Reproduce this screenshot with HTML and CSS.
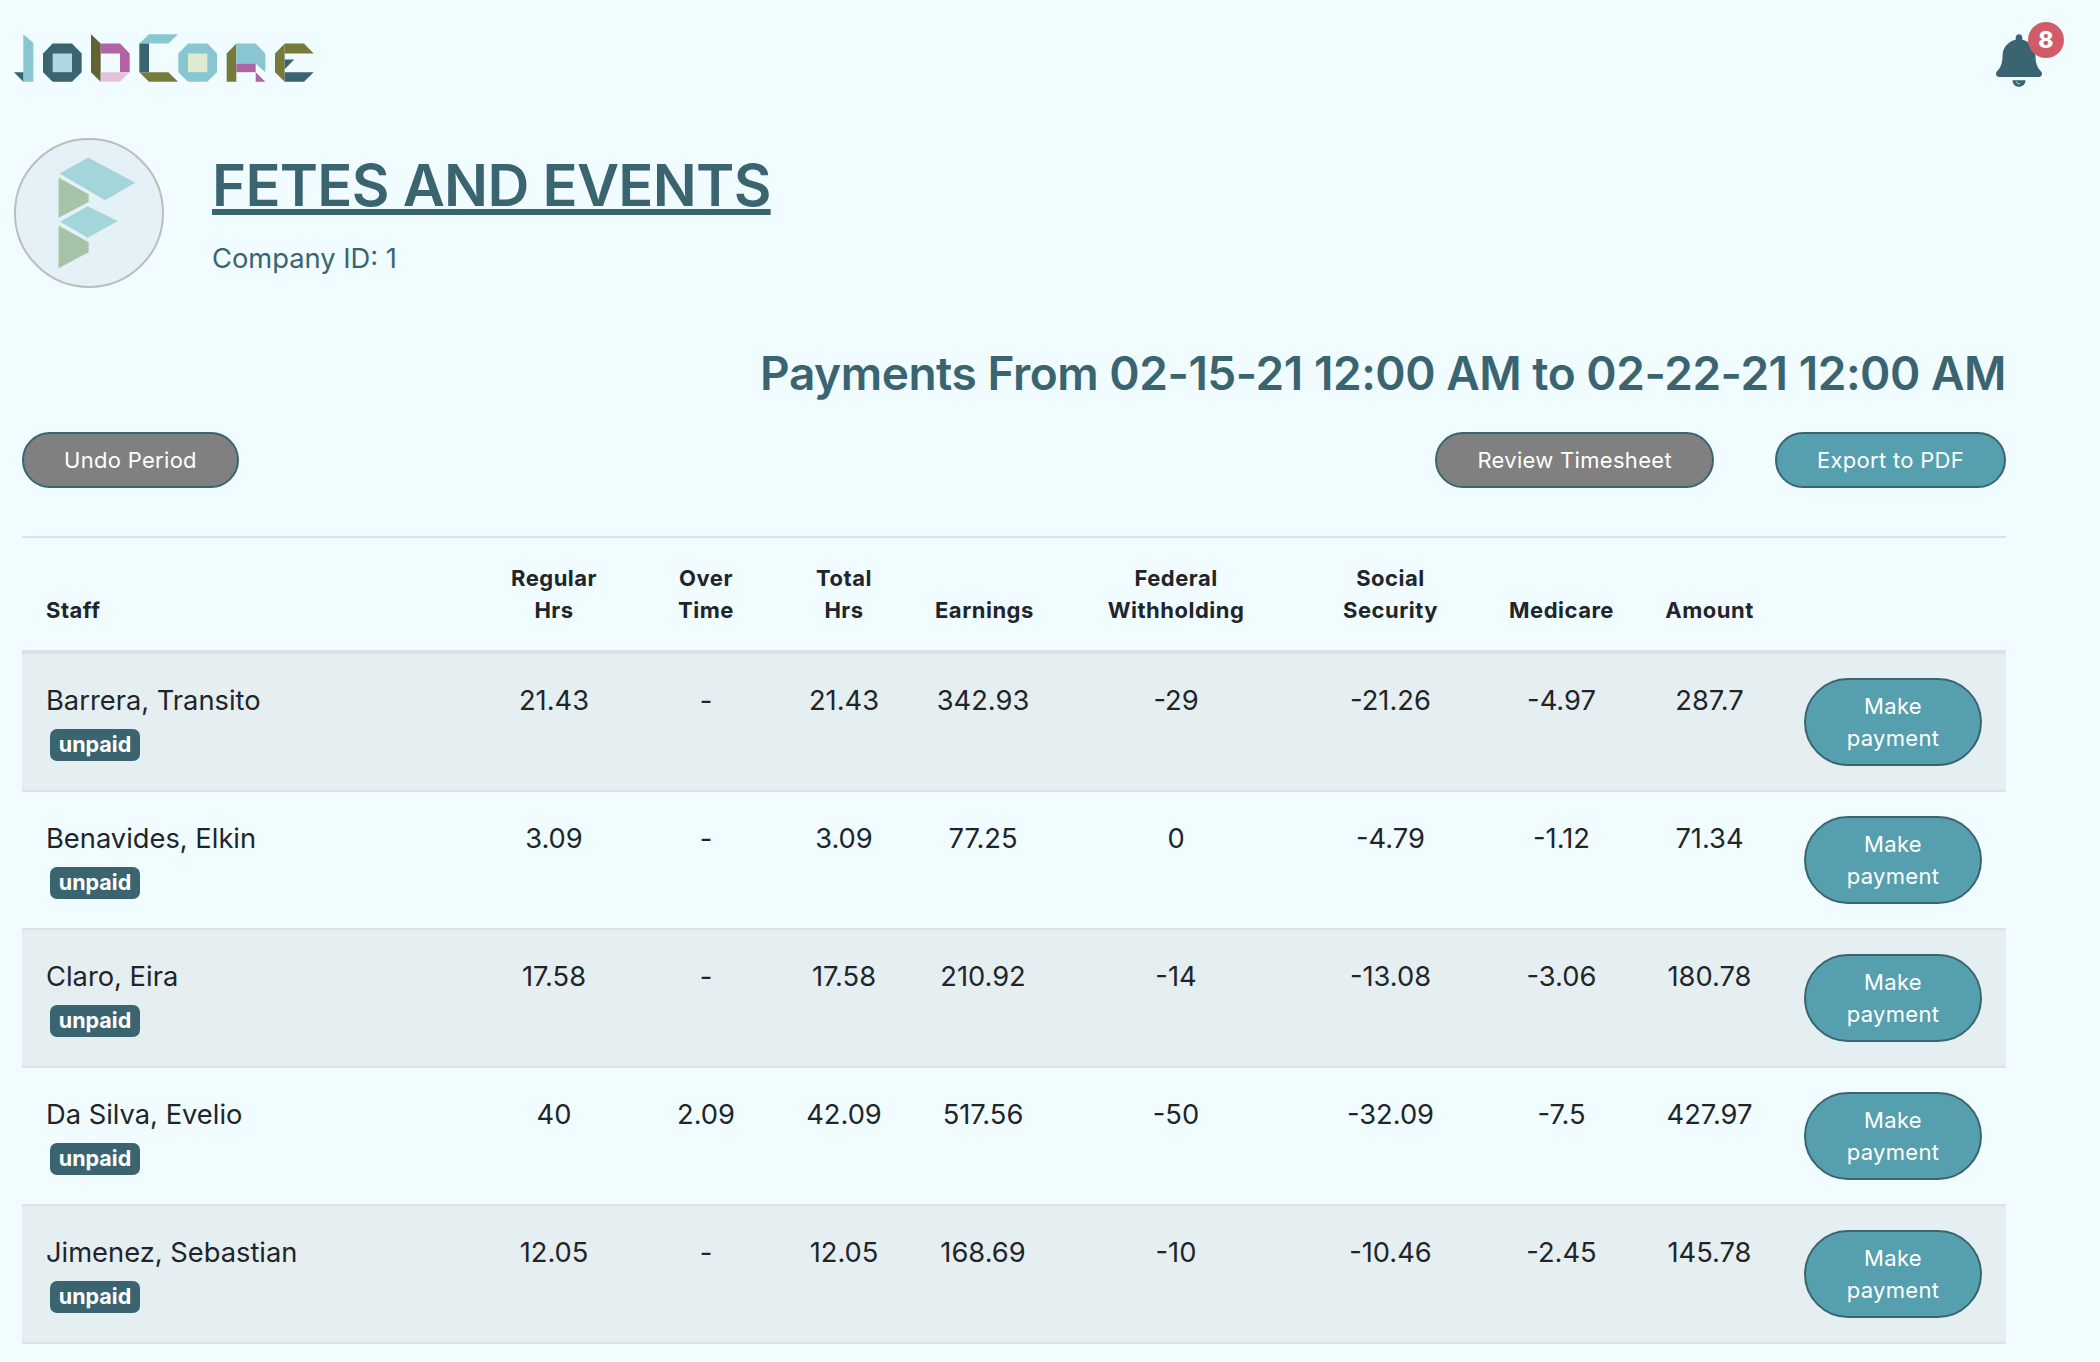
FILE: index.html
```html
<!DOCTYPE html>
<html>
<head>
	<title>JobCore - Payments</title>
	<link rel="stylesheet" href="styles.css">
</head>
<body>
	<header class="topbar">
		<svg class="logo" viewBox="42 102 900 143" role="img" aria-label="JobCore">
			<polygon fill="#88c7d2" points="70,102 100,128 100,245 70,245"/>
			<polygon fill="#3a6570" points="42,216 70,216 70,245"/>
			<polygon fill="#3a6570" points="158,130 216,130 245,160 245,216 216,245 158,245 129,216 129,160"/>
			<rect fill="#aed8e0" x="158" y="160" width="58" height="56"/>
			<polygon fill="#5f6332" points="273,102 302,130 302,245 273,216"/>
			<polygon fill="#b064a3" points="302,130 360,130 389,160 389,216 360,216 360,160 302,160"/>
			<polygon fill="#e4c0dc" points="302,216 389,216 360,245 302,245"/>
			<polygon fill="#88c7d2" points="418,130 447,102 534,102 505,130"/>
			<rect fill="#3a6570" x="418" y="130" width="29" height="86"/>
			<polygon fill="#767b3c" points="418,216 505,216 534,245 447,245"/>
			<polygon fill="#88c7d2" points="564,130 622,130 651,160 651,216 622,245 564,245 535,216 535,160"/>
			<rect fill="#e0ead0" x="564" y="160" width="58" height="56"/>
			<polygon fill="#767b3c" points="680,160 709,130 709,245 680,245"/>
			<polygon fill="#88c7d2" points="709,130 767,130 796,160 796,216 767,190 709,190"/>
			<rect fill="#b064a3" x="709" y="190" width="58" height="26"/>
			<polygon fill="#b064a3" points="767,216 796,245 767,245"/>
			<polygon fill="#767b3c" points="825,160 854,130 854,245 825,216"/>
			<polygon fill="#767b3c" points="854,130 912,130 941,160 854,160"/>
			<polygon fill="#3a6570" points="854,178 883,178 854,207"/>
			<polygon fill="#3a6570" points="854,216 941,216 912,245 854,245"/>
		</svg>
		<div class="bell">
			<svg class="bell-icon" viewBox="0 0 448 512">
				<path fill="#3a6570" d="M224 512c35.32 0 63.97-28.65 63.97-64H160.03c0 35.35 28.65 64 63.97 64zm215.39-149.71c-19.32-20.76-55.47-51.99-55.47-154.29 0-77.7-54.48-139.9-127.94-155.16V32c0-17.67-14.32-32-31.98-32s-31.98 14.33-31.98 32v20.84C118.56 68.1 64.08 130.3 64.08 208c0 102.3-36.15 133.53-55.47 154.29-6 6.45-8.66 14.16-8.61 21.71.11 16.4 12.98 32 32.1 32h383.8c19.12 0 32-15.6 32.1-32 .05-7.55-2.61-15.27-8.61-21.71z"/>
				<path fill="none" stroke="#f0fcff" stroke-width="9" d="M200 462c4 14 16 22 30 22"/>
			</svg>
			<span class="bell-count">8</span>
		</div>
	</header>

	<section class="company">
		<svg class="company-logo" viewBox="42 54 448 448">
			<circle cx="266" cy="278" r="221" fill="#e4f1f7" stroke="#bdbdbd" stroke-width="6"/>
			<polygon fill="#a3d5db" points="178,160 264,112 404,188 314,240"/>
			<polygon fill="#a6c3a8" points="175,172 265,222 265,245 175,292"/>
			<polygon fill="#a3d5db" points="180,304 262,258 352,302 262,352"/>
			<polygon fill="#a6c3a8" points="175,315 265,365 265,395 175,443"/>
		</svg>
		<div class="company-info">
			<h1 class="company-name"><a href="#">FETES AND EVENTS</a></h1>
			<div class="company-id">Company ID: 1</div>
		</div>
	</section>

	<main class="content">
		<h2 class="period">Payments From 02-15-21 12:00 AM to 02-22-21 12:00 AM</h2>

		<div class="actions">
			<button class="btn btn-gray">Undo Period</button>
			<div class="actions-right">
				<button class="btn btn-gray">Review Timesheet</button>
				<button class="btn btn-teal">Export to PDF</button>
			</div>
		</div>

		<table class="payments">
			<colgroup>
				<col class="col-staff">
				<col class="col-regular">
				<col class="col-over">
				<col class="col-total">
				<col class="col-earnings">
				<col class="col-federal">
				<col class="col-social">
				<col class="col-medicare">
				<col class="col-amount">
				<col class="col-pay">
			</colgroup>
			<thead>
				<tr>
					<th class="staff">Staff</th>
					<th>Regular<br>Hrs</th>
					<th>Over<br>Time</th>
					<th>Total<br>Hrs</th>
					<th>Earnings</th>
					<th>Federal<br>Withholding</th>
					<th>Social<br>Security</th>
					<th>Medicare</th>
					<th>Amount</th>
					<th></th>
				</tr>
			</thead>
			<tbody>
				<tr>
					<td class="staff">Barrera, Transito<span class="badge">unpaid</span></td>
					<td>21.43</td><td>-</td><td>21.43</td><td>342.93</td><td>-29</td><td>-21.26</td><td>-4.97</td><td>287.7</td>
					<td><button class="btn btn-teal btn-pay">Make payment</button></td>
				</tr>
				<tr>
					<td class="staff">Benavides, Elkin<span class="badge">unpaid</span></td>
					<td>3.09</td><td>-</td><td>3.09</td><td>77.25</td><td>0</td><td>-4.79</td><td>-1.12</td><td>71.34</td>
					<td><button class="btn btn-teal btn-pay">Make payment</button></td>
				</tr>
				<tr>
					<td class="staff">Claro, Eira<span class="badge">unpaid</span></td>
					<td>17.58</td><td>-</td><td>17.58</td><td>210.92</td><td>-14</td><td>-13.08</td><td>-3.06</td><td>180.78</td>
					<td><button class="btn btn-teal btn-pay">Make payment</button></td>
				</tr>
				<tr>
					<td class="staff">Da Silva, Evelio<span class="badge">unpaid</span></td>
					<td>40</td><td>2.09</td><td>42.09</td><td>517.56</td><td>-50</td><td>-32.09</td><td>-7.5</td><td>427.97</td>
					<td><button class="btn btn-teal btn-pay">Make payment</button></td>
				</tr>
				<tr>
					<td class="staff">Jimenez, Sebastian<span class="badge">unpaid</span></td>
					<td>12.05</td><td>-</td><td>12.05</td><td>168.69</td><td>-10</td><td>-10.46</td><td>-2.45</td><td>145.78</td>
					<td><button class="btn btn-teal btn-pay">Make payment</button></td>
				</tr>
			</tbody>
		</table>
	</main>
</body>
</html>
```

FILE: styles.css
```css
body {
	margin: 0;
	background-color: #f0fcff;
	color: #212529;
	font-family: Inter, "Liberation Sans", sans-serif;
	font-size: 27.3px;
	line-height: 41px;
}
.topbar {
	display: flex;
	justify-content: space-between;
	padding: 34px 59px 0 14px;
}
.logo {
	width: 300px;
	height: 48px;
}
.bell {
	position: relative;
	width: 45px;
	height: 52px;
}
.bell-icon {
	display: block;
	width: 46px;
	height: 53px;
}
.bell-count {
	position: absolute;
	top: -12px;
	left: 32px;
	width: 36px;
	height: 36px;
	border-radius: 50%;
	background-color: #cf5c68;
	color: #fff;
	font-size: 23px;
	font-weight: 800;
	line-height: 36px;
	text-align: center;
}
.company {
	display: flex;
	gap: 48px;
	margin-top: 52px;
	padding-left: 14px;
}
.company-logo {
	width: 150px;
	height: 150px;
}
.company-info {
	padding-top: 11px;
	color: #3a6570;
}
.company-name {
	margin: 0;
	font-size: 58px;
	font-weight: 560;
	letter-spacing: -0.72px;
	line-height: 72px;
}
.company-name a {
	color: #3a6570;
	text-decoration-thickness: 6px;
}
.company-id {
	margin-top: 17px;
}
.content {
	margin: 0 94px 0 22px;
}
.period {
	margin: 57px 0 0;
	color: #3a6570;
	font-size: 46px;
	font-weight: 560;
	letter-spacing: -0.46px;
	line-height: 56px;
	text-align: right;
}
.actions {
	display: flex;
	justify-content: space-between;
	margin-top: 31px;
}
.actions-right {
	display: flex;
	gap: 61px;
}
.btn {
	padding: 10px 40px;
	border: 2px solid #3a6570;
	border-radius: 28px;
	color: #fff;
	font-family: inherit;
	font-size: 22px;
	letter-spacing: 0.3px;
	line-height: 32px;
}
.btn-gray {
	background-color: #808080;
}
.btn-teal {
	background-color: #559fae;
}
.btn-pay {
	display: block;
	width: 178px;
	border-radius: 44px;
}
.payments {
	width: 100%;
	margin-top: 48px;
	border-collapse: collapse;
	table-layout: fixed;
}
.col-staff { width: 451px; }
.col-regular { width: 162px; }
.col-over { width: 142px; }
.col-total { width: 134px; }
.col-earnings { width: 144px; }
.col-federal { width: 242px; }
.col-social { width: 187px; }
.col-medicare { width: 155px; }
.col-amount { width: 141px; }
.col-pay { width: 226px; }
.payments th,
.payments td {
	padding: 24px;
	text-align: center;
}
.payments th {
	border-top: 2px solid #dee2e6;
	border-bottom: 4px solid #dee2e6;
	font-size: 22px;
	font-weight: 700;
	letter-spacing: 0.5px;
	line-height: 32px;
	vertical-align: bottom;
	white-space: nowrap;
}
.payments td {
	border-bottom: 2px solid #dee2e6;
	line-height: 45px;
	vertical-align: top;
}
.payments .staff {
	text-align: left;
}
.payments tbody tr:nth-child(odd) {
	background-color: #e5eff1;
}
.badge {
	display: block;
	width: 90px;
	height: 32px;
	margin: 6px 0 0 4px;
	border-radius: 7px;
	background-color: #3a6570;
	color: #fff;
	font-size: 21.5px;
	font-weight: 700;
	line-height: 31px;
	text-align: center;
}
```
